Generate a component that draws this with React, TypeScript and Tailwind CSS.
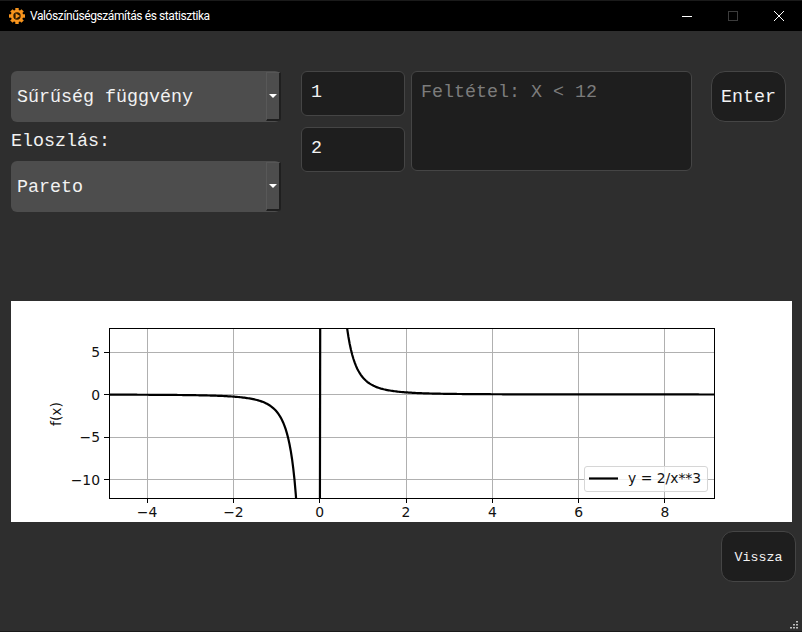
const xTicks = [-4, -2, 0, 2, 4, 6, 8];
const yTicks = [5, 0, -5, -10];

const toX = (v: number) => 308.7 + v * 43.15;
const toY = (v: number) => 93.5 - v * 8.5;
const snap = (n: number) => Math.floor(n) + 0.5;

// y = 2/x**3, sampled like linspace so the jump over 0 gives the vertical line
const curve = Array.from({ length: 500 }, (_, i) => -5 + i * (14.5 / 499))
  .map((x) => `${toX(x).toFixed(2)},${Math.max(-400, Math.min(400, toY(2 / x ** 3))).toFixed(2)}`)
  .join(" ");

const Combo = ({ label }: { label: string }) => (
  <div className="relative flex h-[51px] w-[270px] items-center rounded-[6px] bg-[#4d4d4d] pt-[2px] pl-[6px] text-[18.33px] text-[#f2f2f2]">
    {label}
    <div className="absolute top-[1px] right-0 bottom-[1px] flex w-[15px] items-center justify-center rounded-br-[3px] border-t border-r-2 border-b-2 border-l border-t-[#565656] border-r-[#1f1f1f] border-b-[#1f1f1f] border-l-[#585858]">
      <div className="h-0 w-0 border-x-[4px] border-t-[4px] border-x-transparent border-t-white" />
    </div>
  </div>
);

const Field = ({ value }: { value: string }) => (
  <div className="h-[45px] w-[104px] rounded-[6px] border border-[#454545] bg-[#1e1e1e] pt-[9px] pl-[9px] text-[18.33px] leading-[24px] text-[#f2f2f2]">
    {value}
  </div>
);

const Plot = () => (
  <svg className="block h-[221px] w-[781px] bg-white" viewBox="0 0 781 221" fontFamily="DejaVu Sans" fontSize="13.9">
    <defs>
      <clipPath id="axes">
        <rect x="98" y="27" width="606" height="171" />
      </clipPath>
    </defs>
    {xTicks.map((t) => (
      <g key={t}>
        <line x1={snap(toX(t))} x2={snap(toX(t))} y1="27" y2="197" stroke="#b0b0b0" strokeWidth="1" />
        <line x1={snap(toX(t))} x2={snap(toX(t))} y1="197" y2="202" stroke="#000" strokeWidth="1" />
        <text x={toX(t)} y="216" textAnchor="middle" fill="#111">
          {t < 0 ? `\u2212${-t}` : t}
        </text>
      </g>
    ))}
    {yTicks.map((t) => (
      <g key={t}>
        <line x1="98" x2="704" y1={snap(toY(t))} y2={snap(toY(t))} stroke="#b0b0b0" strokeWidth="1" />
        <line x1="93" x2="98" y1={snap(toY(t))} y2={snap(toY(t))} stroke="#000" strokeWidth="1" />
        <text x="89" y={toY(t) + 5} textAnchor="end" fill="#111">
          {t < 0 ? `\u2212${-t}` : t}
        </text>
      </g>
    ))}
    <polyline points={curve} fill="none" stroke="#000" strokeWidth="2.2" clipPath="url(#axes)" />
    <rect x="98.5" y="27.5" width="605" height="170" fill="none" stroke="#000" strokeWidth="1" />
    <text transform="translate(50 113) rotate(-90)" textAnchor="middle" fill="#111">
      f(x)
    </text>
    <rect x="573.5" y="165.5" width="123" height="25" rx="2.5" fill="#fff" fillOpacity="0.8" stroke="#d6d6d6" />
    <line x1="578" x2="607" y1="177.5" y2="177.5" stroke="#000" strokeWidth="2.2" />
    <text x="617" y="182" fill="#111">
      y = 2/x**3
    </text>
  </svg>
);

const AppIcon = () => (
  <svg width="16" height="16" viewBox="0 0 16 16" className="ml-[9px]">
    <g stroke="#f7941d" strokeWidth="3.4">
      <line x1="8" y1="0" x2="8" y2="16" />
      <line x1="0" y1="8" x2="16" y2="8" />
      <line x1="2.4" y1="2.4" x2="13.6" y2="13.6" />
      <line x1="13.6" y1="2.4" x2="2.4" y2="13.6" />
    </g>
    <circle cx="8" cy="8" r="6.2" fill="#f7941d" />
    <circle cx="8" cy="8" r="3.7" fill="#2a1800" />
    <path d="M6.6 5.2 L11 8 L6.6 10.8 Z" fill="#f7941d" />
  </svg>
);

const App = () => {
  return (
    <div className="relative h-[632px] w-[802px] overflow-hidden border-t border-b border-[#1a1a1a] bg-[#2e2e2e] font-['Liberation_Mono',monospace]">
      <div className="flex h-[30px] items-center bg-black text-white">
        <AppIcon />
        <span className="ml-[5px] font-['Roboto',sans-serif] text-[12px] tracking-[-0.4px]">
          Valószínűségszámítás és statisztika
        </span>
        <div className="ml-auto flex items-center">
          <div className="flex h-[30px] w-[46px] items-center justify-center">
            <div className="h-[1px] w-[10px] bg-white" />
          </div>
          <div className="flex h-[30px] w-[46px] items-center justify-center">
            <div className="h-[10px] w-[10px] border border-[#3c3c3c]" />
          </div>
          <div className="flex h-[30px] w-[46px] items-center justify-center">
            <svg width="10" height="10" viewBox="0 0 10 10" stroke="#fff" strokeWidth="1">
              <path d="M0 0 L10 10 M10 0 L0 10" />
            </svg>
          </div>
        </div>
      </div>

      <div className="flex h-[270px] items-start pt-[40px] pl-[11px]">
        <div className="flex w-[270px] flex-col">
          <Combo label="Sűrűség függvény" />
          <div className="mt-[9px] mb-[8px] h-[22px] text-[18.33px] leading-[22px] text-[#f2f2f2]">Eloszlás:</div>
          <Combo label="Pareto" />
        </div>
        <div className="ml-[20px] flex flex-col gap-[11px]">
          <Field value="1" />
          <Field value="2" />
        </div>
        <div className="ml-[6px] h-[100px] w-[281px] rounded-[6px] border border-[#454545] bg-[#1e1e1e] pt-[9px] pl-[9px] text-[18.33px] leading-[24px] text-[#7c7c7c]">
          Feltétel: X &lt; 12
        </div>
        <button className="ml-[19px] h-[51px] w-[75px] rounded-[14px] border border-[#454545] bg-[#1e1e1e] pt-[2px] text-[18.33px] text-[#f2f2f2]">
          Enter
        </button>
      </div>

      <div className="pl-[11px]">
        <Plot />
      </div>

      <div className="mt-[9px] flex justify-end pr-[6px]">
        <button className="h-[51px] w-[75px] rounded-[12px] border border-[#454545] bg-[#1e1e1e] pt-[2px] text-[13.33px] text-[#f2f2f2]">
          Vissza
        </button>
      </div>

      {/* size grip */}
      <svg className="absolute right-[4px] bottom-[2px]" width="9" height="9" viewBox="0 0 9 9" fill="#bdbdbd">
        <rect x="7" y="1" width="2" height="1.5" />
        <rect x="4" y="4" width="2" height="1.5" />
        <rect x="7" y="4" width="2" height="1.5" />
        <rect x="1" y="7" width="2" height="1.5" />
        <rect x="4" y="7" width="2" height="1.5" />
        <rect x="7" y="7" width="2" height="1.5" />
      </svg>
    </div>
  );
};

export default App;
